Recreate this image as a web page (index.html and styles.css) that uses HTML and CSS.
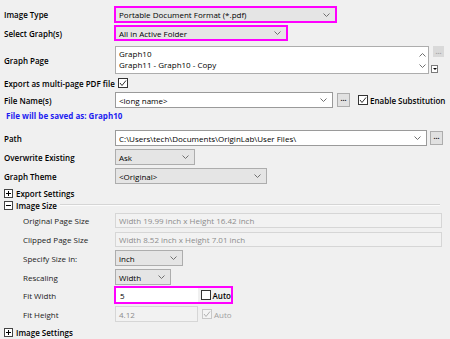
FILE: index.html
```html
<!DOCTYPE html>
<html lang="en">
<head>
  <meta charset="UTF-8">
  <title>Export Graphs</title>
  <link rel="stylesheet" href="styles.css">
</head>
<body>
  <div class="dialog">

    <div class="row h17">
      <div class="label">Image Type</div>
      <div class="combo grey hl w-type">Portable Document Format (*.pdf)
        <svg class="chev" width="7" height="4" viewBox="0 0 7 4"><path d="M0.5 0.5 L3.5 3.5 L6.5 0.5"/></svg>
      </div>
    </div>

    <div class="row h16 mt2">
      <div class="label">Select Graph(s)</div>
      <div class="combo grey hl w-select">All in Active Folder
        <svg class="chev" width="7" height="4" viewBox="0 0 7 4"><path d="M0.5 0.5 L3.5 3.5 L6.5 0.5"/></svg>
      </div>
    </div>

    <div class="row h28 mt5">
      <div class="label">Graph Page</div>
      <div class="listbox">
        <div class="items">
          <div>Graph10</div>
          <div>Graph11 - Graph10 - Copy</div>
        </div>
        <div class="scroll">
          <svg width="7" height="4" viewBox="0 0 7 4"><path d="M0.5 3.5 L3.5 0.5 L6.5 3.5"/></svg>
          <svg width="7" height="4" viewBox="0 0 7 4"><path d="M0.5 0.5 L3.5 3.5 L6.5 0.5"/></svg>
        </div>
      </div>
      <div class="side">
        <div class="btn-dots off">...</div>
        <div class="mini-drop"><span class="tri"></span></div>
      </div>
    </div>

    <div class="row h12 mt3">
      <div class="label wide">Export as multi-page PDF file</div>
      <svg class="check" width="10" height="10" viewBox="0 0 10 10"><rect x="0.5" y="0.5" width="9" height="9"/><path d="M2 5 L4 7.5 L8 2.5"/></svg>
    </div>

    <div class="row h16 mt3">
      <div class="label">File Name(s)</div>
      <div class="combo white w-file">&lt;long name&gt;
        <svg class="chev" width="7" height="4" viewBox="0 0 7 4"><path d="M0.5 0.5 L3.5 3.5 L6.5 0.5"/></svg>
      </div>
      <div class="btn-dots ml4">...</div>
      <svg class="check ml8" width="10" height="10" viewBox="0 0 10 10"><rect x="0.5" y="0.5" width="9" height="9"/><path d="M2 5 L4 7.5 L8 2.5"/></svg>
      <span class="opt">Enable Substitution</span>
    </div>

    <div class="row h12 mt1">
      <div class="saved">File will be saved as: Graph10</div>
    </div>

    <div class="row h16 mt9">
      <div class="label">Path</div>
      <div class="combo white w-path">C:\Users\tech\Documents\OriginLab\User Files\
        <svg class="chev" width="7" height="4" viewBox="0 0 7 4"><path d="M0.5 0.5 L3.5 3.5 L6.5 0.5"/></svg>
      </div>
      <div class="btn-dots ml3">...</div>
    </div>

    <div class="row h16 mt3">
      <div class="label">Overwrite Existing</div>
      <div class="combo grey w-over">Ask
        <svg class="chev" width="7" height="4" viewBox="0 0 7 4"><path d="M0.5 0.5 L3.5 3.5 L6.5 0.5"/></svg>
      </div>
    </div>

    <div class="row h16 mt3">
      <div class="label">Graph Theme</div>
      <div class="combo grey w-theme">&lt;Original&gt;
        <svg class="chev" width="7" height="4" viewBox="0 0 7 4"><path d="M0.5 0.5 L3.5 3.5 L6.5 0.5"/></svg>
      </div>
    </div>

    <div class="row h12 mt3">
      <span class="toggle plus"></span>
      <span class="group">Export Settings</span>
    </div>

    <div class="row h12">
      <span class="toggle"></span>
      <span class="group">Image Size</span>
      <div class="sep"></div>
    </div>

    <div class="row h15 mt2 sub">
      <div class="label">Original Page Size</div>
      <div class="field off w-full">Width 19.99 inch x Height 16.42 inch</div>
    </div>

    <div class="row h15 mt4 sub">
      <div class="label">Clipped Page Size</div>
      <div class="field off w-full">Width 8.52 inch x Height 7.01 inch</div>
    </div>

    <div class="row h16 mt3 sub">
      <div class="label">Specify Size in:</div>
      <div class="combo grey w-unit">inch
        <svg class="chev" width="7" height="4" viewBox="0 0 7 4"><path d="M0.5 0.5 L3.5 3.5 L6.5 0.5"/></svg>
      </div>
    </div>

    <div class="row h16 mt3 sub">
      <div class="label">Rescaling</div>
      <div class="combo grey w-scale">Width
        <svg class="chev" width="7" height="4" viewBox="0 0 7 4"><path d="M0.5 0.5 L3.5 3.5 L6.5 0.5"/></svg>
      </div>
    </div>

    <div class="row h18 mt1 sub">
      <div class="label">Fit Width</div>
      <div class="hl-box">
        <div class="field w-fit">5</div>
        <svg class="check empty ml3" width="10" height="10" viewBox="0 0 10 10"><rect x="0.5" y="0.5" width="9" height="9"/></svg>
        <span class="opt">Auto</span>
      </div>
    </div>

    <div class="row h16 mt2 sub">
      <div class="label">Fit Height</div>
      <div class="field off w-fit2">4.12</div>
      <svg class="check dim ml4" width="10" height="10" viewBox="0 0 10 10"><rect x="0.5" y="0.5" width="9" height="9"/><path d="M2 5 L4 7.5 L8 2.5"/></svg>
      <span class="opt dim-text">Auto</span>
    </div>

    <div class="row h12 mt4">
      <span class="toggle plus"></span>
      <span class="group">Image Settings</span>
    </div>

  </div>
</body>
</html>
```

FILE: styles.css
```css
body {
  margin: 0;
  background: #f0f0f0;
  font-family: 'Open Sans', 'Noto Sans', sans-serif;
  font-size: 8px;
  color: #000;
  width: 450px;
  height: 339px;
  overflow: hidden;
}

.dialog {
  padding: 6px 0 0 4px;
}

.row {
  display: flex;
  align-items: center;
}

.h12 { height: 12px; }
.h15 { height: 15px; }
.h16 { height: 16px; }
.h17 { height: 17px; }
.h18 { height: 18px; }
.h28 { height: 28px; }

.mt1 { margin-top: 1px; }
.mt2 { margin-top: 2px; }
.mt3 { margin-top: 3px; }
.mt4 { margin-top: 4px; }
.mt5 { margin-top: 5px; }
.mt9 { margin-top: 9px; }

.ml3 { margin-left: 3px; }
.ml4 { margin-left: 4px; }
.ml8 { margin-left: 8px; }

.label {
  width: 111px;
  flex: none;
  font-weight: 600;
  white-space: nowrap;
}

.label.wide {
  width: auto;
  margin-right: 3px;
}

.sub .label {
  width: 92px;
  padding-left: 19px;
  font-weight: 400;
  color: #222;
}

/* combos */
.combo {
  box-sizing: border-box;
  height: 100%;
  display: flex;
  align-items: center;
  justify-content: space-between;
  padding: 0 5px 0 3px;
  border: 1px solid #adadad;
  white-space: nowrap;
}

.combo.grey { background: #e5e5e5; }
.combo.white { background: #fff; border-color: #9a9a9a; }

.combo.hl {
  border: 2px solid #ff00ff;
  margin-left: -1px;
}

.chev {
  flex: none;
}

.chev path,
.scroll path {
  fill: none;
  stroke: #707070;
  stroke-width: 1;
}

.w-type { width: 223px; }
.w-select { width: 174px; }
.w-file { width: 218px; }
.w-path { width: 312px; }
.w-over { width: 80px; }
.w-theme { width: 152px; }
.w-unit { width: 68px; }
.w-scale { width: 56px; }
.w-full { width: 327px; }
.w-fit { width: 82px; }
.w-fit2 { width: 83px; }

/* graph page list */
.listbox {
  box-sizing: border-box;
  width: 314px;
  height: 28px;
  border: 1px solid #adadad;
  background: #fff;
  display: flex;
  justify-content: space-between;
}

.items {
  padding: 1px 3px;
  line-height: 11px;
}

.scroll {
  width: 12px;
  display: flex;
  flex-direction: column;
  justify-content: space-around;
  align-items: center;
  padding: 2px 0;
}

.side {
  height: 28px;
  margin-left: 2px;
  display: flex;
  flex-direction: column;
  justify-content: space-between;
  align-items: flex-start;
}

.side .btn-dots {
  margin-left: 2px;
  width: 11px;
  height: 11px;
}

.mini-drop {
  box-sizing: border-box;
  width: 7px;
  height: 8px;
  border: 1px solid #7a7a7a;
  background: #fff;
  display: flex;
  align-items: center;
  justify-content: center;
  margin-bottom: 1px;
}

.tri {
  border-left: 2px solid transparent;
  border-right: 2px solid transparent;
  border-top: 2px solid #000;
}

/* buttons */
.btn-dots {
  box-sizing: border-box;
  width: 13px;
  height: 14px;
  background: #e1e1e1;
  border: 1px solid #adadad;
  font-weight: 700;
  font-size: 7px;
  line-height: 9px;
  text-align: center;
  flex: none;
}

.btn-dots.off {
  background: #d9d9d9;
  border-color: #d9d9d9;
  color: #a0a0a0;
}

/* checkboxes */
.check {
  flex: none;
}

.check rect {
  fill: #fff;
  stroke: #333;
}

.check path {
  fill: none;
  stroke: #333;
  stroke-width: 1;
}

.check.dim rect {
  fill: #f4f4f4;
  stroke: #c8c8c8;
}

.check.dim path {
  stroke: #b0b0b0;
}

.opt {
  margin-left: 2px;
  font-weight: 600;
  white-space: nowrap;
}

.dim-text {
  color: #a0a0a0;
  font-weight: 400;
}

.saved {
  margin-left: 2px;
  color: #1c1cf0;
  font-weight: 700;
}

/* text fields */
.field {
  box-sizing: border-box;
  height: 100%;
  padding: 0 3px;
  display: flex;
  align-items: center;
  background: #fff;
  border: 1px solid #7a7a7a;
}

.field.off {
  background: #f2f2f2;
  border-color: #d6d6d6;
  color: #8c8c8c;
}

.hl-box {
  box-sizing: border-box;
  height: 18px;
  width: 119px;
  margin-left: -1px;
  border: 2px solid #ff00ff;
  display: flex;
  align-items: center;
}

.hl-box .field {
  border-color: #fff;
}

/* group headers */
.toggle {
  box-sizing: border-box;
  width: 9px;
  height: 9px;
  border: 1px solid #444;
  background: #fff;
  position: relative;
  flex: none;
}

.toggle::before {
  content: '';
  position: absolute;
  left: 1px;
  top: 3px;
  width: 5px;
  height: 1px;
  background: #000;
}

.toggle.plus::after {
  content: '';
  position: absolute;
  left: 3px;
  top: 1px;
  width: 1px;
  height: 5px;
  background: #000;
}

.group {
  margin-left: 3px;
  font-weight: 600;
}

.sep {
  flex: 1;
  margin: 0 10px 0 3px;
  border-top: 1px solid #d5d5d5;
  border-bottom: 1px solid #fbfbfb;
}
```
